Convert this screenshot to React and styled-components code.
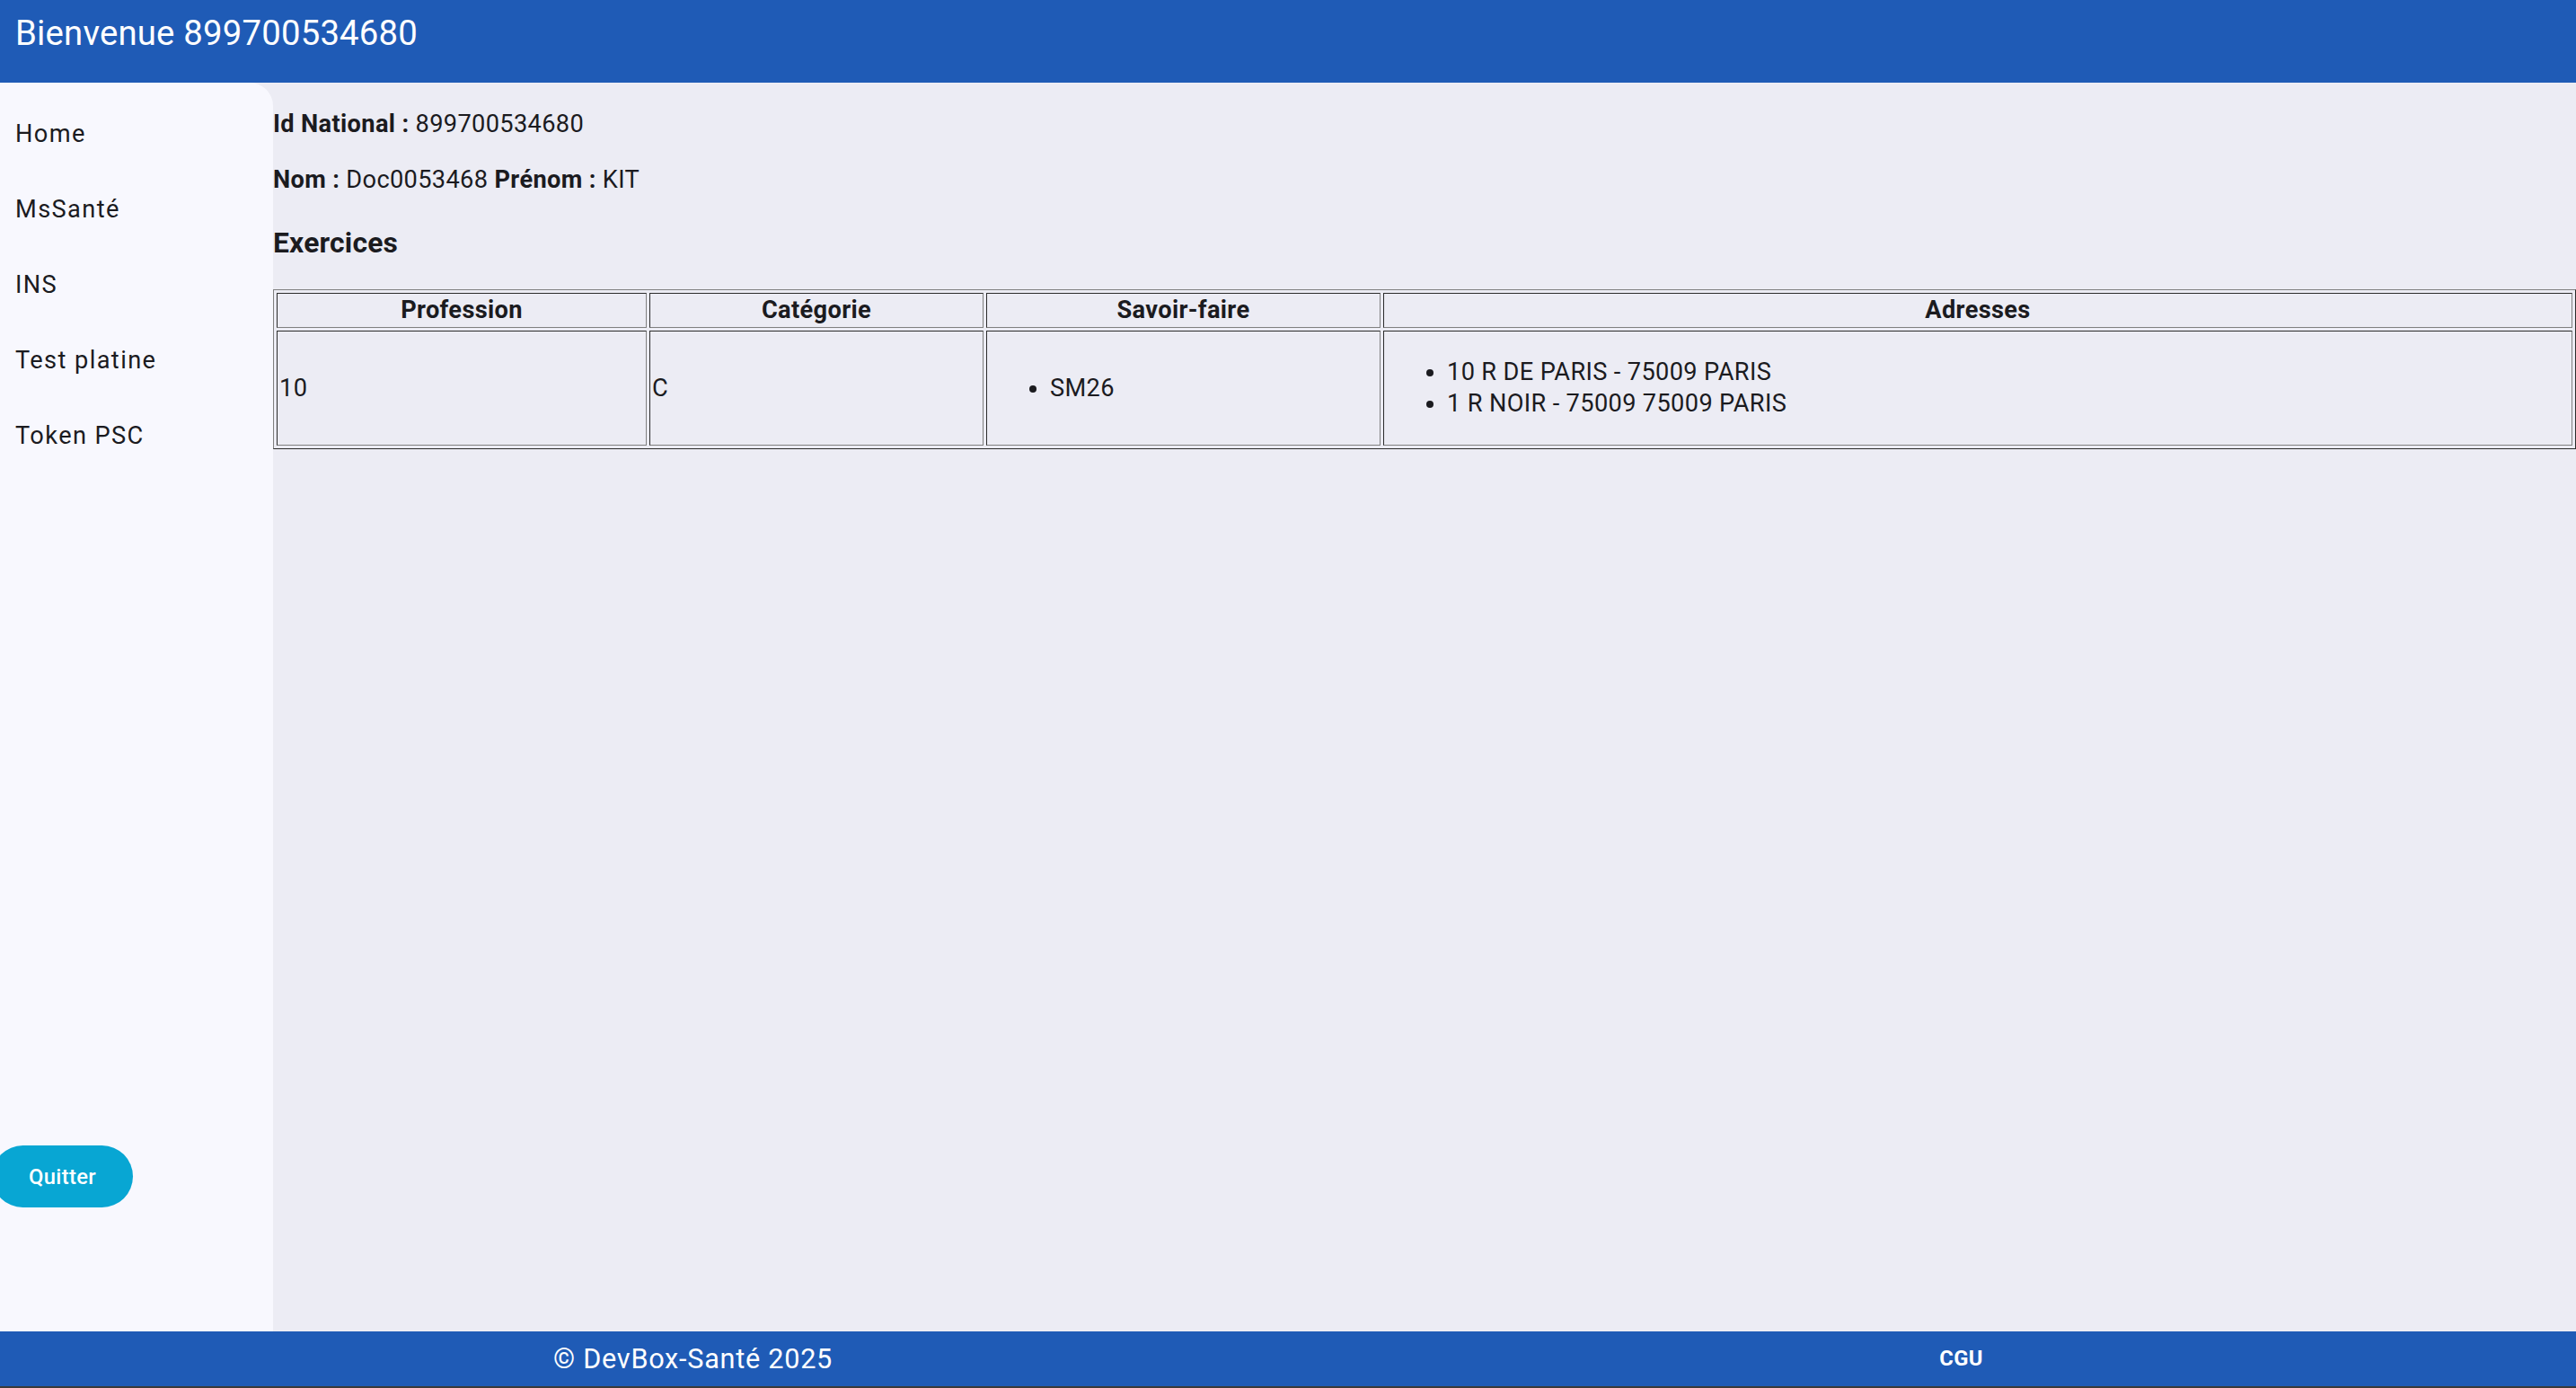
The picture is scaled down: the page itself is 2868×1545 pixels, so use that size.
import React from "react";
import styled, { createGlobalStyle } from "styled-components";

const GlobalStyle = createGlobalStyle`
  html, body {
    margin: 0;
    padding: 0;
    height: 100%;
  }
  body {
    font-family: Roboto, "Liberation Sans", Arial, sans-serif;
    font-size: 27.2px;
    line-height: 35px;
    letter-spacing: 0.35px;
    color: #1b1b1f;
    background: #ececf4;
  }
  #root {
    min-height: 100vh;
  }
`;

const Page = styled.div`
  display: grid;
  grid-template-rows: 92px 1fr 63px;
  min-height: 100vh;
`;

const Header = styled.header`
  background: #1f5bb6;
  color: #ffffff;
  box-sizing: border-box;
  padding: 15px 17px 0;
`;

const Title = styled.h1`
  margin: 0;
  font-size: 38.3px;
  line-height: 44px;
  font-weight: 400;
  letter-spacing: 0.2px;
`;

const Body = styled.div`
  display: flex;
  min-height: 0;
`;

const Sidebar = styled.nav`
  width: 304px;
  flex: 0 0 304px;
  background: #f8f8fe;
  border-top-right-radius: 26px;
  display: flex;
  flex-direction: column;
  padding-top: 15px;
  box-sizing: border-box;
`;

const NavItem = styled.a`
  display: flex;
  align-items: center;
  height: 84px;
  padding-left: 17px;
  font-size: 27.2px;
  letter-spacing: 1.4px;
  color: #1b1b1f;
  text-decoration: none;
  cursor: pointer;
`;

const QuitButton = styled.button`
  margin-top: auto;
  margin-bottom: 138px;
  margin-left: -9px;
  width: 157px;
  height: 69px;
  border: none;
  border-radius: 35px;
  background: #08a6d3;
  color: #ffffff;
  font-family: Roboto, "Liberation Sans", Arial, sans-serif;
  font-size: 23.8px;
  font-weight: 500;
  letter-spacing: 0.3px;
  cursor: pointer;
`;

const Main = styled.main`
  flex: 1;
  min-width: 0;
  padding-top: 2px;
`;

const Line = styled.p`
  margin: 27.2px 0;
`;

const SectionTitle = styled.h3`
  margin: 31.8px 0;
  font-size: 31.8px;
  line-height: 41px;
  font-weight: 700;
  letter-spacing: 0.2px;
`;

const Table = styled.table`
  width: 100%;
  table-layout: fixed;
  border-collapse: separate;
  border-spacing: 3px;
  border: 1px outset #808080;
  font-size: 27.2px;
  line-height: 35px;
  margin-top: -1px;
`;

const Th = styled.th`
  border: 1px inset #808080;
  padding: 1px 2px;
  font-weight: 700;
  text-align: center;
  vertical-align: middle;
`;

const Td = styled.td`
  border: 1px inset #808080;
  padding: 1px 2px;
  vertical-align: middle;
`;

const List = styled.ul`
  margin: 27.2px 0;
  padding-left: 68px;
`;

const Footer = styled.footer`
  background: #1f5bb6;
  color: #ffffff;
  display: flex;
  align-items: center;
  justify-content: space-around;
  padding-right: 44px;
  box-sizing: border-box;
  border-bottom: 2px solid #3a3a3a;
`;

const Copyright = styled.span`
  font-size: 30.6px;
  line-height: 36px;
  letter-spacing: 0.75px;
`;

const FooterLink = styled.a`
  font-size: 23.8px;
  font-weight: 700;
  letter-spacing: 0.4px;
  color: #ffffff;
  text-decoration: none;
  cursor: pointer;
`;

const navItems = ["Home", "MsSanté", "INS", "Test platine", "Token PSC"];

export default function App() {
  return (
    <>
      <GlobalStyle />
      <Page>
        <Header>
          <Title>Bienvenue 899700534680</Title>
        </Header>
        <Body>
          <Sidebar>
            {navItems.map((item) => (
              <NavItem key={item}>{item}</NavItem>
            ))}
            <QuitButton>Quitter</QuitButton>
          </Sidebar>
          <Main>
            <Line>
              <b>Id National :</b> 899700534680
            </Line>
            <Line>
              <b>Nom :</b> Doc0053468 <b>Prénom :</b> KIT
            </Line>
            <SectionTitle>Exercices</SectionTitle>
            <Table>
              <colgroup>
                <col style={{ width: "412px" }} />
                <col style={{ width: "372px" }} />
                <col style={{ width: "439px" }} />
                <col />
              </colgroup>
              <thead>
                <tr>
                  <Th>Profession</Th>
                  <Th>Catégorie</Th>
                  <Th>Savoir-faire</Th>
                  <Th>Adresses</Th>
                </tr>
              </thead>
              <tbody>
                <tr>
                  <Td>10</Td>
                  <Td>C</Td>
                  <Td>
                    <List>
                      <li>SM26</li>
                    </List>
                  </Td>
                  <Td>
                    <List>
                      <li>10 R DE PARIS - 75009 PARIS</li>
                      <li>1 R NOIR - 75009 75009 PARIS</li>
                    </List>
                  </Td>
                </tr>
              </tbody>
            </Table>
          </Main>
        </Body>
        <Footer>
          <Copyright>© DevBox-Santé 2025</Copyright>
          <FooterLink>CGU</FooterLink>
        </Footer>
      </Page>
    </>
  );
}
